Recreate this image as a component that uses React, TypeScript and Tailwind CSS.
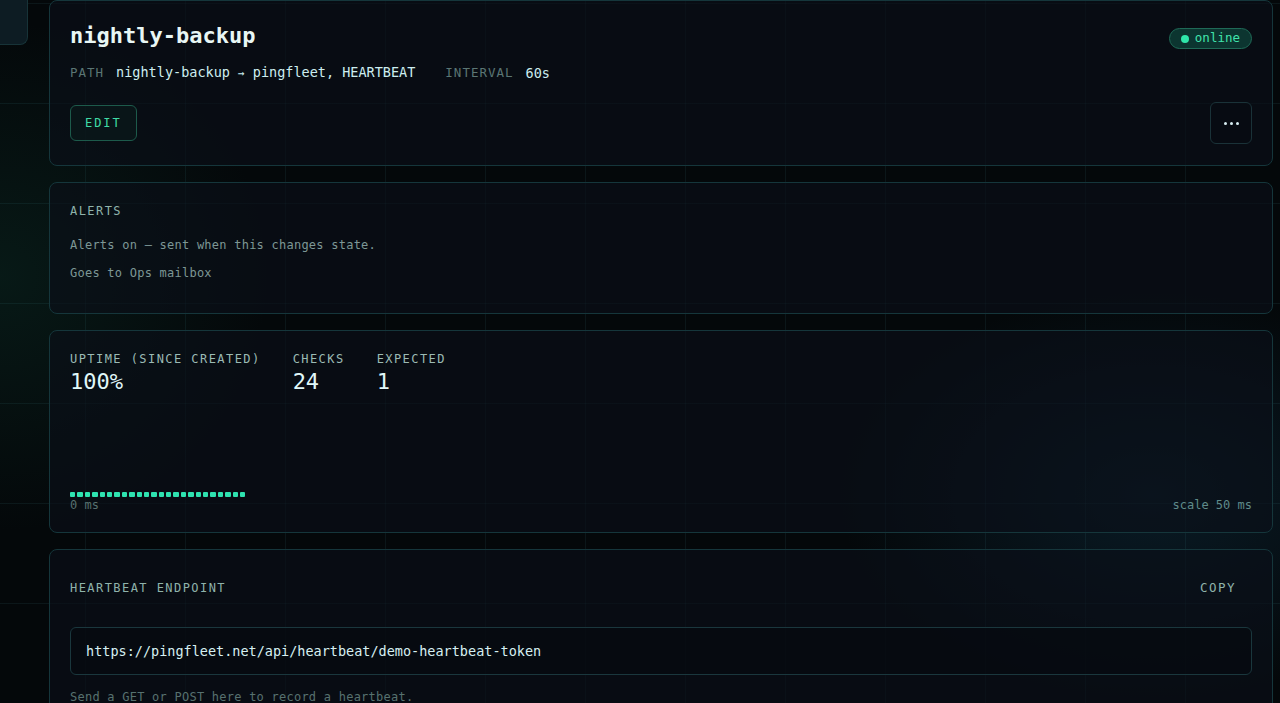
import React from 'react';

const mono = 'font-["DejaVu_Sans_Mono",monospace]';

const Card: React.FC<{ className?: string; children: React.ReactNode }> = ({
  className = '',
  children,
}) => (
  <section
    className={`rounded-lg border border-[#15363b] bg-[#0a0f19]/65 px-5 ${className}`}
  >
    {children}
  </section>
);

const Label: React.FC<{ children: React.ReactNode; className?: string }> = ({
  children,
  className = '',
}) => (
  <div
    className={`text-[12px] leading-4 tracking-[0.12em] text-[#8fb3ab] ${className}`}
  >
    {children}
  </div>
);

const stats = [
  { label: 'UPTIME (SINCE CREATED)', value: '100%' },
  { label: 'CHECKS', value: '24' },
  { label: 'EXPECTED', value: '1' },
];

const samples = Array.from({ length: 24 }, (_, i) => i);

export default function App() {
  return (
    <div
      className={`min-h-screen bg-[#04080a] bg-[radial-gradient(ellipse_30%_50%_at_0%_38%,rgba(18,80,62,0.24),transparent_70%),radial-gradient(ellipse_35%_40%_at_90%_68%,rgba(22,70,100,0.3),transparent_70%)] ${mono}`}
    >
      <div className="min-h-screen bg-[linear-gradient(rgba(70,150,160,0.1)_1px,transparent_1px),linear-gradient(90deg,rgba(70,150,160,0.1)_1px,transparent_1px)] bg-[length:100px_100px] bg-[position:85px_3px]">
        <div className="flex items-start">
          {/* collapsed sidebar edge */}
          <aside className="w-[28px] shrink-0">
            <div className="h-[45px] rounded-br-lg border-r border-b border-[#173338] bg-[#0d1c23]" />
          </aside>

          <main className="ml-[21px] flex w-[1224px] flex-col gap-4">
            {/* header */}
            <Card className="flex justify-between pt-5 pb-6">
              <div className="flex flex-col">
                <h1 className="mt-[1px] text-[22px] font-bold leading-7 text-[#e8f7f5]">
                  nightly-backup
                </h1>
                <div className="mt-[12px] flex items-center text-[13.5px] leading-5">
                  <span className="mr-3 text-[12.5px] tracking-[0.08em] text-[#5b7674]">
                    PATH
                  </span>
                  <span className="text-[#cdeef0]">
                    nightly-backup <span className="text-[11px]">→</span> pingfleet, HEARTBEAT
                  </span>
                  <span className="ml-[30px] mr-3 text-[12.5px] tracking-[0.08em] text-[#5b7674]">
                    INTERVAL
                  </span>
                  <span className="text-[#cdeef0]">60s</span>
                </div>
                <div className="mt-[21px]">
                  <button className="h-9 rounded-md border border-[#1d5a4b] bg-[#0a1a1b]/60 px-[14px] text-[12px] tracking-[0.16em] text-[#3fdba6]">
                    EDIT
                  </button>
                </div>
              </div>
              <div className="flex flex-col items-end justify-between pt-[7px]">
                <span className="flex h-[21px] items-center gap-[6px] rounded-full border border-[#1f6a57] bg-[#0c3530] px-[11px] text-[12.5px] text-[#40e3ab]">
                  <span className="h-2 w-2 rounded-full bg-[#2fe6aa]" />
                  online
                </span>
                <button className="-mb-[3px] flex h-[42px] w-[42px] items-center justify-center rounded-md border border-[#1a3238] bg-[#070b12]/70">
                  <span className="flex gap-[3px]">
                    <span className="h-[3px] w-[3px] rounded-full bg-[#d8eef2]" />
                    <span className="h-[3px] w-[3px] rounded-full bg-[#d8eef2]" />
                    <span className="h-[3px] w-[3px] rounded-full bg-[#d8eef2]" />
                  </span>
                </button>
              </div>
            </Card>

            {/* alerts */}
            <Card className="pt-5 pb-[30px]">
              <Label>ALERTS</Label>
              <p className="mt-4 text-[12px] leading-5 tracking-[0.02em] text-[#7d9795]">
                Alerts on — sent when this changes state.
              </p>
              <p className="mt-2 text-[12px] leading-5 tracking-[0.02em] text-[#7d9795]">
                Goes to Ops mailbox
              </p>
            </Card>

            {/* stats + chart */}
            <Card className="pt-5 pb-[19px]">
              <div className="flex gap-8">
                {stats.map((s) => (
                  <div key={s.label} className="flex flex-col">
                    <Label className="text-[#9bbab4]">{s.label}</Label>
                    <div className="mt-[2px] text-[22px] leading-[26px] text-[#e0f8f9]">
                      {s.value}
                    </div>
                  </div>
                ))}
              </div>
              <div className="mt-3 flex h-[90px] items-end gap-[2px]">
                {samples.map((i) => (
                  <span key={i} className="h-[5px] w-[5.4px] rounded-[1px] bg-[#2ee3b0]" />
                ))}
              </div>
              <div className="mt-[1px] flex justify-between text-[12px] leading-[15px] text-[#57716f]">
                <span>0 ms</span>
                <span className="text-[#5f8a8a]">scale 50 ms</span>
              </div>
            </Card>

            {/* heartbeat endpoint */}
            <Card className="pt-5 pb-5">
              <div className="flex h-9 items-center justify-between">
                <Label>HEARTBEAT ENDPOINT</Label>
                <button className="px-4 text-[12.5px] tracking-[0.12em] text-[#8fb3ab]">
                  COPY
                </button>
              </div>
              <div className="mt-[21px] flex h-12 items-center rounded-md border border-[#1a373d] bg-[#060a10]/70 px-[15px] text-[13.5px] text-[#d6f0f2]">
                https://pingfleet.net/api/heartbeat/demo-heartbeat-token
              </div>
              <p className="mt-3 text-[12px] leading-5 tracking-[0.02em] text-[#57716f]">
                Send a GET or POST here to record a heartbeat.
              </p>
            </Card>
          </main>
        </div>
      </div>
    </div>
  );
}
